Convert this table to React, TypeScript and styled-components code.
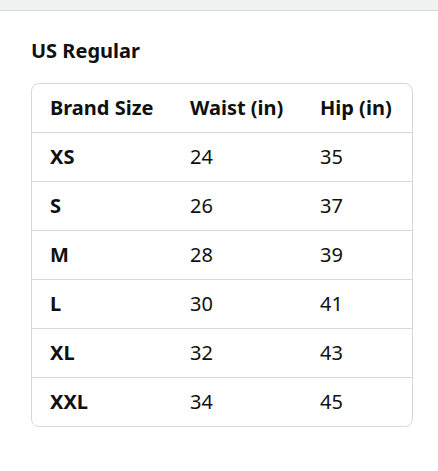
import styled, { createGlobalStyle } from 'styled-components';

const GlobalStyle = createGlobalStyle`
  html, body {
    margin: 0;
    padding: 0;
    background: #ffffff;
  }
  body {
    font-family: "Noto Sans", "Open Sans", Arial, sans-serif;
    color: #0f1111;
  }
`;

const TopBar = styled.div`
  height: 10px;
  background: #f0f2f2;
  border-bottom: 1px solid #d5d9d9;
`;

const Content = styled.div`
  padding: 28px 26px 0 31px;
`;

const Title = styled.h2`
  margin: 0 0 20px;
  font-size: 20px;
  line-height: 24px;
  font-weight: 700;
`;

const Table = styled.div`
  border: 1px solid #d5d9d9;
  border-radius: 8px;
  overflow: hidden;
  width: 380px;
`;

const Row = styled.div<{ $last?: boolean }>`
  display: grid;
  grid-template-columns: 140px 130px 1fr;
  height: 48px;
  align-items: center;
  border-bottom: ${(p) => (p.$last ? 'none' : '1px solid #d5d9d9')};
`;

const Cell = styled.div<{ $bold?: boolean }>`
  padding-left: 18px;
  font-size: 20px;
  line-height: 24px;
  font-weight: ${(p) => (p.$bold ? 700 : 400)};
  white-space: nowrap;
`;

const rows = [
  ['XS', '24', '35'],
  ['S', '26', '37'],
  ['M', '28', '39'],
  ['L', '30', '41'],
  ['XL', '32', '43'],
  ['XXL', '34', '45'],
];

export default function App() {
  return (
    <>
      <GlobalStyle />
      <TopBar />
      <Content>
        <Title>US Regular</Title>
        <Table>
          <Row>
            <Cell $bold>Brand Size</Cell>
            <Cell $bold>Waist (in)</Cell>
            <Cell $bold>Hip (in)</Cell>
          </Row>
          {rows.map(([size, waist, hip], i) => (
            <Row key={size} $last={i === rows.length - 1}>
              <Cell $bold>{size}</Cell>
              <Cell>{waist}</Cell>
              <Cell>{hip}</Cell>
            </Row>
          ))}
        </Table>
      </Content>
    </>
  );
}
